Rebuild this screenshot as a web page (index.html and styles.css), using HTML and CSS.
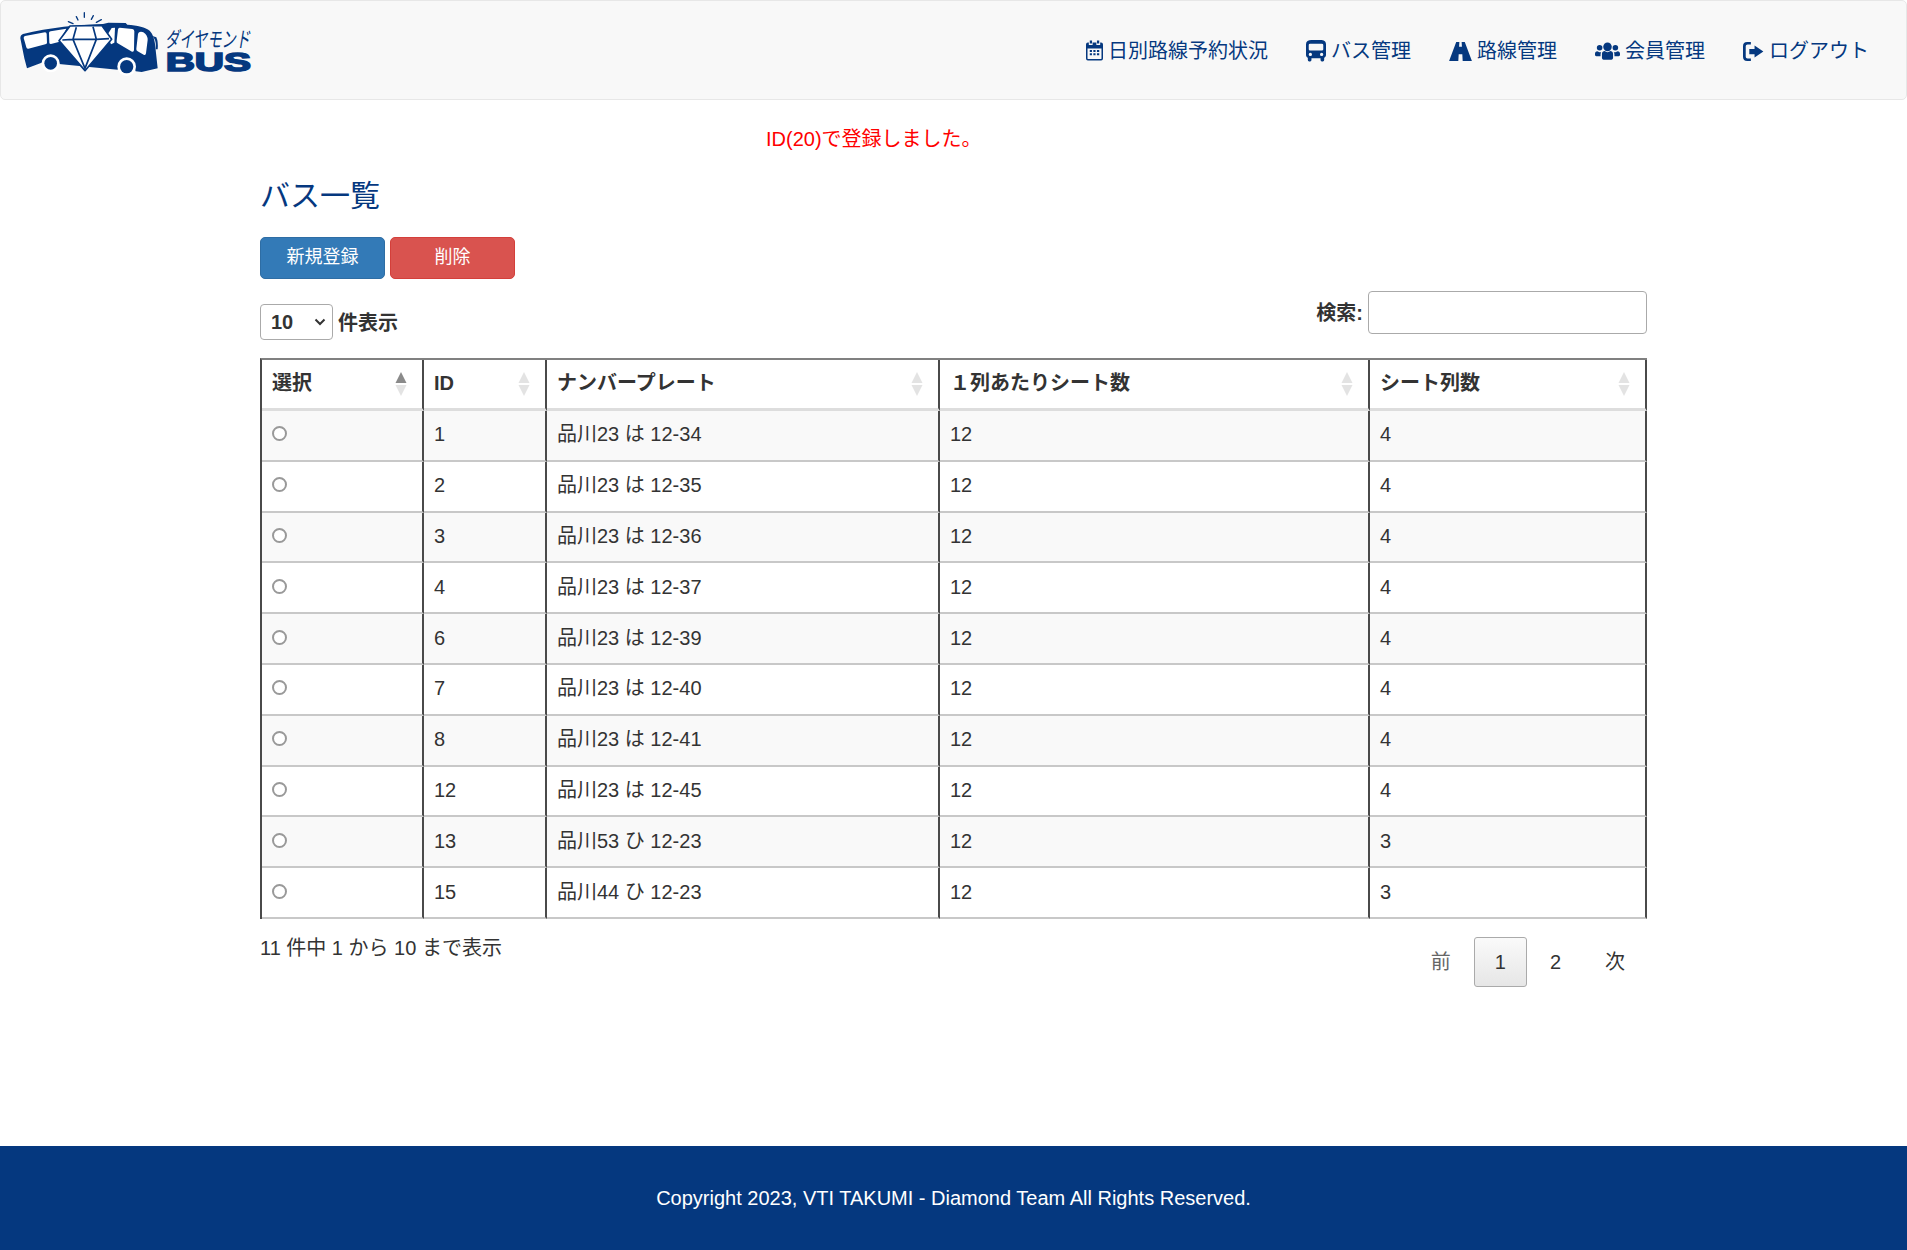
FILE: index.html
```html
<!DOCTYPE html>
<html lang="ja">
<head>
<meta charset="utf-8">
<title>バス一覧</title>
<link rel="stylesheet" href="styles.css">
</head>
<body>
<nav class="navbar">
  <a class="brand" href="#">
    <svg class="logo" viewBox="0 0 840 270" width="280" height="90" aria-label="ダイヤモンド BUS">
      <g transform="translate(-60,-30)">
        <g stroke="#05387f" stroke-width="4" stroke-linecap="round">
          <path d="M208 65 L222 71M232 50 L237 60M256 38 L256 52M283 47 L277 58M307 59 L292 67"/>
        </g>
        <path fill="#05387f" d="M72 102 C150 82 240 75 312 72 L328 68 L380 69 L385 74 C415 76 440 82 452 92 C462 102 468 120 470 150 L476 205 L428 216 L410 214 A28 28 0 0 0 356 209 L180 192 A27 27 0 0 0 128 188 L84 205 L76 175 L64 115 Q64 105 72 102Z"/>
        <path fill="#05387f" d="M460 108 L472 112 Q478 125 476 148 L470 148 Q472 125 466 116Z"/>
        <g fill="#fff">
          <path d="M78 108 L138 97 Q143 97 143 102 L144 128 Q144 132 139 133 L88 146 Q83 147 82 142 L74 114 Q74 109 78 108Z"/>
          <path d="M155 94 L202 86 L182 125 L156 132 Q151 132 151 128 L150 98 Q150 95 155 94Z"/>
          <path d="M338 84 L348 83 L346 128 L336 133 L325 105Z"/>
          <path d="M362 83 L400 87 Q406 88 406 94 L405 150 Q405 156 399 155 L356 130 Q352 128 353 122 L357 88 Q358 83 362 83Z"/>
          <path d="M422 96 Q427 94 433 97 Q446 105 446 120 L441 160 Q440 167 434 164 L416 154 Q411 151 412 146 L417 102 Q418 97 422 96Z"/>
        </g>
        <path fill="#fff" stroke="#05387f" stroke-width="5" stroke-linejoin="round" d="M213 78 L308 76 L338 118 L258 212 L180 122Z"/>
        <path fill="none" stroke="#05387f" stroke-width="5" stroke-linejoin="round" d="M190 120 L222 118 L232 82M222 118 L258 205 L292 118 L282 80M222 118 L292 118 L330 116"/>
        <circle cx="155" cy="190" r="27" fill="#fff"/>
        <circle cx="155" cy="190" r="19" fill="#05387f"/>
        <circle cx="383" cy="200" r="28" fill="#fff"/>
        <circle cx="383" cy="200" r="20" fill="#05387f"/>
        <text class="logo-kana" x="498" y="142" textLength="255" lengthAdjust="spacingAndGlyphs">ダイヤモンド</text>
        <text class="logo-bus" x="500" y="212" textLength="256" lengthAdjust="spacingAndGlyphs">BUS</text>
      </g>
    </svg>
  </a>
  <ul class="nav-list">
    <li><a class="nav-link" href="#">
      <svg class="nav-icon" viewBox="0 0 18 22" width="17" height="22"><path d="M4 0h2.400v3H4zM11.600 0H14v3h-2.400zM2 2h1v2.600h4V2h4v2.600h4V2h1a2 2 0 0 1 2 2v15a2 2 0 0 1-2 2H2a2 2 0 0 1-2-2V4a2 2 0 0 1 2-2zm-.4 6.400V19q0 .4.4.4h14q.4 0 .4-.4V8.400zM4 10h2.300v2H4zm3.800 0h2.300v2H7.800zm3.800 0H14v2h-2.400zM4 13.500h2.300v2H4zm3.800 0h2.300v2H7.800zm3.800 0H14v2h-2.400z"/></svg>
      <span>日別路線予約状況</span></a></li>
    <li><a class="nav-link" href="#">
      <svg class="nav-icon" viewBox="0 0 22 24" width="20" height="22"><path fill-rule="evenodd" d="M6 0h10c3.500 0 6 1.500 6 4.500V16c0 1.600-.6 2.600-2 3.300V22a1.500 1.500 0 0 1-1.500 1.500h-1A1.500 1.500 0 0 1 16 22v-2H6v2a1.500 1.500 0 0 1-1.500 1.500h-1A1.500 1.500 0 0 1 2 22v-2.700C.6 18.600 0 17.600 0 16V4.500C0 1.500 2.500 0 6 0zM4.500 4A1.500 1.500 0 0 0 3 5.500V10a1.500 1.500 0 0 0 1.500 1.500h13A1.500 1.500 0 0 0 19 10V5.500A1.500 1.500 0 0 0 17.500 4zM4.800 14a1.800 1.800 0 1 0 0 3.600 1.800 1.800 0 0 0 0-3.600zm12.400 0a1.800 1.800 0 1 0 0 3.600 1.800 1.800 0 0 0 0-3.600z"/></svg>
      <span>バス管理</span></a></li>
    <li><a class="nav-link" href="#">
      <svg class="nav-icon" viewBox="0 0 24 20" width="23" height="19"><path fill-rule="evenodd" d="M7.500 0h3.300l-.3 5h3l-.3-5h3.300L24 20H14.300l-.4-7h-3.800l-.4 7H0z"/></svg>
      <span>路線管理</span></a></li>
    <li><a class="nav-link" href="#">
      <svg class="nav-icon" viewBox="0 0 27 20" width="25" height="19"><circle cx="13.500" cy="5" r="4.600"/><path d="M7.500 12.500c0-2 1.600-3 3-3 .8.800 1.800 1.200 3 1.200s2.200-.4 3-1.200c1.400 0 3 1 3 3V17c0 1.500-1.500 2-3 2h-6c-1.500 0-3-.5-3-2z"/><circle cx="5" cy="6" r="3"/><circle cx="22" cy="6" r="3"/><path d="M0 12.500C0 11 1 9.800 2.500 9.800c.7.600 1.500.9 2.500.9h1.700A5 5 0 0 0 6 13.500V15H1.500C.5 15 0 14.300 0 13.500zM27 12.500c0-1.500-1-2.700-2.500-2.700-.7.600-1.500.9-2.500.9h-1.700a5 5 0 0 1 .7 2.800V15h4.500c1 0 1.500-.7 1.500-1.500z"/></svg>
      <span>会員管理</span></a></li>
    <li><a class="nav-link" href="#">
      <svg class="nav-icon" viewBox="0 0 20 18" width="21" height="19"><path d="M4 0h3.500v2.400H4.300Q2.600 2.400 2.600 4v10q0 1.600 1.700 1.600h3.200V18H4q-4 0-4-4V4q0-4 4-4zM11 3.200l8.400 5.800-8.400 5.800v-3.300H6V6.500h5z"/></svg>
      <span>ログアウト</span></a></li>
  </ul>
</nav>

<main class="container">
  <p class="message">ID(20)で登録しました。</p>
  <h1 class="title">バス一覧</h1>
  <div class="actions">
    <button class="btn btn-primary" type="button">新規登録</button>
    <button class="btn btn-danger" type="button">削除</button>
  </div>
  <div class="controls">
    <label class="length">
      <select class="length-select"><option>10</option></select>
      <span class="length-text">件表示</span>
    </label>
    <label class="search"><span>検索:</span><input class="search-input" type="search"></label>
  </div>

  <table class="bus-table">
    <colgroup>
      <col class="c1"><col class="c2"><col class="c3"><col class="c4"><col class="c5">
    </colgroup>
    <thead>
      <tr>
        <th><div class="th-in"><span>選択</span><svg class="sort" viewBox="0 0 12 24" width="12" height="24"><path class="on" d="M6 0l5.500 11H.5z"/><path d="M6 24L.5 13h11z"/></svg></div></th>
        <th><div class="th-in"><span>ID</span><svg class="sort" viewBox="0 0 12 24" width="12" height="24"><path d="M6 0l5.500 11H.5z"/><path d="M6 24L.5 13h11z"/></svg></div></th>
        <th><div class="th-in"><span>ナンバープレート</span><svg class="sort" viewBox="0 0 12 24" width="12" height="24"><path d="M6 0l5.500 11H.5z"/><path d="M6 24L.5 13h11z"/></svg></div></th>
        <th><div class="th-in"><span>１列あたりシート数</span><svg class="sort" viewBox="0 0 12 24" width="12" height="24"><path d="M6 0l5.500 11H.5z"/><path d="M6 24L.5 13h11z"/></svg></div></th>
        <th><div class="th-in"><span>シート列数</span><svg class="sort" viewBox="0 0 12 24" width="12" height="24"><path d="M6 0l5.500 11H.5z"/><path d="M6 24L.5 13h11z"/></svg></div></th>
      </tr>
    </thead>
    <tbody>
      <tr><td><input class="radio" type="radio" name="bus"></td><td>1</td><td>品川23 は 12-34</td><td>12</td><td>4</td></tr>
      <tr><td><input class="radio" type="radio" name="bus"></td><td>2</td><td>品川23 は 12-35</td><td>12</td><td>4</td></tr>
      <tr><td><input class="radio" type="radio" name="bus"></td><td>3</td><td>品川23 は 12-36</td><td>12</td><td>4</td></tr>
      <tr><td><input class="radio" type="radio" name="bus"></td><td>4</td><td>品川23 は 12-37</td><td>12</td><td>4</td></tr>
      <tr><td><input class="radio" type="radio" name="bus"></td><td>6</td><td>品川23 は 12-39</td><td>12</td><td>4</td></tr>
      <tr><td><input class="radio" type="radio" name="bus"></td><td>7</td><td>品川23 は 12-40</td><td>12</td><td>4</td></tr>
      <tr><td><input class="radio" type="radio" name="bus"></td><td>8</td><td>品川23 は 12-41</td><td>12</td><td>4</td></tr>
      <tr><td><input class="radio" type="radio" name="bus"></td><td>12</td><td>品川23 は 12-45</td><td>12</td><td>4</td></tr>
      <tr><td><input class="radio" type="radio" name="bus"></td><td>13</td><td>品川53 ひ 12-23</td><td>12</td><td>3</td></tr>
      <tr><td><input class="radio" type="radio" name="bus"></td><td>15</td><td>品川44 ひ 12-23</td><td>12</td><td>3</td></tr>
    </tbody>
  </table>

  <div class="table-foot">
    <div class="info">11 件中 1 から 10 まで表示</div>
    <div class="pagination">
      <a class="page muted" href="#">前</a>
      <a class="page current" href="#">1</a>
      <a class="page" href="#">2</a>
      <a class="page" href="#">次</a>
    </div>
  </div>
</main>

<footer class="footer">Copyright 2023, VTI TAKUMI - Diamond Team All Rights Reserved.</footer>
</body>
</html>
```

FILE: styles.css
```css
* { box-sizing: border-box; }
html, body { margin: 0; padding: 0; }
body {
  min-height: 1250px;
  display: flex;
  flex-direction: column;
  background: #fff;
  color: #333;
  font-family: "Liberation Sans", "Noto Sans CJK JP", sans-serif;
  font-size: 20px;
  line-height: 28px;
}
a { text-decoration: none; color: inherit; }

.navbar {
  height: 100px;
  display: flex;
  justify-content: space-between;
  background: #f8f8f8;
  border: 1px solid #e7e7e7;
  border-radius: 5px;
  padding-right: 37px;
}
.brand { display: block; height: 98px; }
.logo { display: block; margin: 9px 0 0 18px; }
.logo-kana { font-size: 64px; fill: #05387f; font-style: italic; }
.logo-bus { font-size: 80px; font-weight: 700; fill: #05387f; stroke: #05387f; stroke-width: 5px; }
.nav-list {
  list-style: none;
  margin: 0;
  padding: 2px 0 0;
  display: flex;
  align-items: center;
  gap: 38px;
}
.nav-link {
  display: flex;
  align-items: center;
  gap: 5px;
  color: #05387f;
}
.nav-icon { fill: #05387f; flex: none; }

.container { width: 1387px; margin: 0 auto; }
.message {
  margin: 25px 0 0;
  padding-left: 506px;
  color: #f00;
}
.title {
  margin: 23px 0 0;
  font-size: 30px;
  line-height: 40px;
  font-weight: 400;
  color: #05387f;
}
.actions { display: flex; gap: 5px; margin-top: 21px; }
.btn {
  width: 125px;
  height: 42px;
  padding: 0;
  border-radius: 5px;
  border: 1px solid;
  color: #fff;
  font: 18px/1.4 "Liberation Sans", "Noto Sans CJK JP", sans-serif;
}
.btn-primary { background: #337ab7; border-color: #2e6da4; }
.btn-danger { background: #d9534f; border-color: #d43f3a; }

.controls {
  display: flex;
  justify-content: space-between;
  margin-top: 12px;
  height: 49px;
}
.length {
  align-self: flex-end;
  display: flex;
  align-items: center;
  gap: 5px;
  font-weight: 700;
}
.length-text { padding-top: 2px; }
.length-select {
  appearance: none;
  width: 73px;
  height: 36px;
  padding: 0 0 0 10px;
  background: #fff url("data:image/svg+xml,%3Csvg xmlns='http://www.w3.org/2000/svg' width='12' height='8'%3E%3Cpath d='M1.500 1.500L6 6l4.500-4.500' fill='none' stroke='%23333' stroke-width='2'/%3E%3C/svg%3E") no-repeat right 6px center;
  border: 1px solid #aaa;
  border-radius: 4px;
  color: #333;
  font: 700 20px "Liberation Sans", sans-serif;
}
.search {
  align-self: flex-start;
  display: flex;
  align-items: center;
  gap: 5px;
  font-weight: 700;
}
.search-input {
  width: 279px;
  height: 43px;
  background: #fff;
  border: 1px solid #aaa;
  border-radius: 4px;
}

.bus-table {
  width: 1387px;
  margin-top: 18px;
  table-layout: fixed;
  border-collapse: separate;
  border-spacing: 0;
  border-top: 2px solid #808080;
  border-left: 2px solid #4a4a4a;
}
.c1 { width: 162px; }
.c2 { width: 123px; }
.c3 { width: 393px; }
.c4 { width: 430px; }
.c5 { width: 277px; }
.bus-table th, .bus-table td {
  padding: 0 10px;
  text-align: left;
  border-right: 2px solid #4a4a4a;
}
.bus-table th {
  height: 51px;
  font-weight: 700;
  border-bottom: 3px solid #ddd;
  line-height: 26px;
}
.bus-table th span { margin-top: -2px; }
.bus-table td {
  height: 50.800px;
  padding-bottom: 2px;
  border-bottom: 2px solid #c8c8c8;
}
.bus-table tbody tr:nth-child(odd) td { background: #f9f9f9; }
.th-in {
  display: flex;
  justify-content: space-between;
  align-items: center;
  padding-right: 5px;
}
.sort { fill: #e3e3e3; flex: none; }
.sort .on { fill: #8a8a8a; }
.radio {
  appearance: none;
  display: block;
  width: 15px;
  height: 15px;
  margin: 0 0 1px;
  background: #fff;
  border: 2px solid #999;
  border-radius: 50%;
}

.table-foot {
  display: flex;
  justify-content: space-between;
  align-items: flex-start;
  margin-top: 18px;
}
.info { margin-top: -3px; }
.pagination { display: flex; gap: 2px; margin-right: 1px; }
.page {
  display: block;
  height: 50px;
  padding: 10px 20px;
  border: 1px solid transparent;
  border-radius: 3px;
  color: #333;
  line-height: 28px;
}
.page.muted { color: #666; }
.page.current {
  border-color: #aaa;
  background: linear-gradient(to bottom, #fafafa, #e6e6e6);
}

.footer {
  margin-top: auto;
  height: 104px;
  display: flex;
  align-items: center;
  justify-content: center;
  background: #05387f;
  color: #fff;
}
```
